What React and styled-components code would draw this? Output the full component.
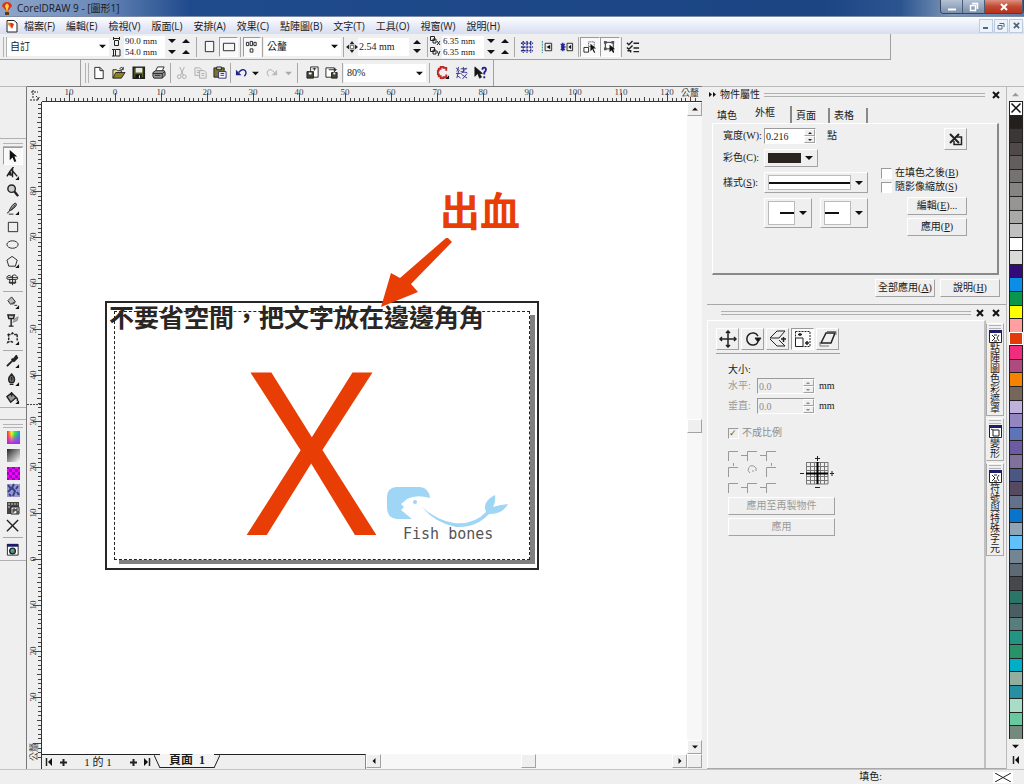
import { Fragment } from "react";
import styled, { createGlobalStyle, css } from "styled-components";

const SANS = '"Open Sans", "Noto Sans CJK TC", sans-serif';
const SERIF = '"Liberation Serif", "Noto Sans CJK TC", serif';

const GlobalStyle = createGlobalStyle`
  * { box-sizing: border-box; }
  body {
    margin: 0;
    background: #efefef;
    color: #1a1a1a;
    font-family: ${SERIF};
    font-size: 10px;
    line-height: 12px;
  }
  button, input, select {
    font: inherit;
    color: inherit;
    margin: 0;
    padding: 0;
    border: 0;
    border-radius: 0;
    background: none;
  }
  svg { display: block; flex: none; }
`;

const raised = css`
  border: 1px solid;
  border-color: #fff #a2a2a2 #a2a2a2 #fff;
`;
const sunken = css`
  border: 1px solid;
  border-color: #9a9a9a #fff #fff #9a9a9a;
`;

const Window = styled.div`
  display: flex;
  flex-direction: column;
  min-height: 100vh;
`;

/* title + menu */

const TitleBar = styled.header`
  display: flex;
  height: 17px;
  padding-left: 1px;
  gap: 4px;
  border-bottom: 1px solid #7c8ca8;
  background: linear-gradient(90deg, #8fa6c9 0, #6f8dbb 90px, #1f4a8c 190px, #1b4583 80%, #2c5590 88%, #7f97b8 93%, #5b7aa5 100%);
`;
const Title = styled.h1`
  flex: 1;
  margin: 0;
  font: 400 10px/16px ${SANS};
`;
const WindowButtons = styled.div`
  display: flex;
  height: 14px;
  border: 1px solid #33455f;
  border-top: 0;
  border-radius: 0 0 4px 4px;
  overflow: hidden;
`;
const WindowButton = styled.button`
  display: flex;
  align-items: center;
  justify-content: center;
  width: ${(p) => (p.$close ? 38 : 22)}px;
  border-right: 1px solid #4a5d7a;
  background: ${(p) => (p.$close ? "linear-gradient(#dd9080, #c04a34 50%, #b8301a)" : "linear-gradient(#b4c2d4, #7b8fab)")};
`;
const MenuBar = styled.nav`
  display: flex;
  align-items: center;
  height: 17px;
  padding: 0 1px 0 5px;
  background: linear-gradient(#fdfdff, #e4e9f6 60%, #d7def0);
`;
const MenuItem = styled.button`
  padding: 0 5px 0 6px;
  font: 400 10px/16px ${SANS};
  white-space: nowrap;
`;
const MdiButtons = styled.div`
  display: flex;
  gap: 1px;
  margin-left: auto;
`;
const MdiButton = styled.button`
  display: flex;
  align-items: center;
  justify-content: center;
  width: 14px;
  height: 14px;
  border: 1px solid #bccbe0;
  background: #edf3fb;
`;

/* toolbars */

const Bar = styled.div`
  display: flex;
  align-items: center;
  width: ${(p) => p.$width}px;
  height: 26px;
  margin-left: ${(p) => p.$offset || 0}px;
  padding-left: ${(p) => p.$pad || 3}px;
  border-right: 1px solid #a0a0a0;
  border-bottom: ${(p) => (p.$under ? "1px solid #a0a0a0" : "0")};
  border-left: ${(p) => (p.$offset ? "1px solid #a0a0a0" : "0")};
`;
const Grip = styled.span`
  width: ${(p) => (p.$wide ? p.$wide + "px" : "4px")};
  height: ${(p) => (p.$wide ? "4px" : "20px")};
  border: solid #b4b4b4;
  border-width: ${(p) => (p.$wide ? "1px 0" : "0 1px")};
`;
const Divider = styled.span`
  width: 1px;
  height: 20px;
  margin: 0 ${(p) => p.$gap || 5}px;
  background: #a8a8a8;
`;
const ToolButton = styled.button`
  display: flex;
  align-items: center;
  justify-content: center;
  width: ${(p) => p.$w || 20}px;
  height: 20px;
  ${(p) => p.$on && css`${sunken} background: #f9f9f9;`}
`;
const Combo = styled.span`
  display: flex;
  align-items: center;
  width: ${(p) => p.$width}px;
  height: 18px;
  padding: 0 3px;
  background: #fff;
`;
const Select = styled.select`
  flex: 1;
  min-width: 0;
  appearance: none;
  outline: 0;
`;
const Pair = styled.div`
  display: grid;
  grid-template-columns: 12px ${(p) => p.$field}px 14px 14px;
  grid-auto-rows: 11px;
  align-items: center;
  font-size: 9px;
`;
const Field = styled.input`
  width: ${(p) => (p.$width ? p.$width + "px" : "100%")};
  height: ${(p) => (p.$width ? "18px" : "100%")};
  min-width: 0;
  padding-left: 1px;
  background: #fff;
`;
const Arrow = styled.button`
  display: flex;
  align-items: center;
  justify-content: center;
  height: 8px;
`;
const Stack = styled.span`
  display: flex;
  flex-direction: column;
  gap: 1px;
  padding: 0 4px;
`;

/* left tool column */

const Body = styled.main`
  display: flex;
  flex: 1;
`;
const Tools = styled.aside`
  width: 27px;
  padding-top: 51px;
  border-right: 1px solid #777;
  border-top: 1px solid #bbb;
`;
const ToolSection = styled.div`
  display: flex;
  flex-direction: column;
  align-items: center;
  padding-top: 4px;
  margin-bottom: 11px;
  border: solid #b0b0b0;
  border-width: 1px 0;
`;
const ToolGroup = styled.div`
  display: grid;
  grid-auto-rows: 1fr;
  width: 20px;
  height: ${(p) => p.$height}px;
  button { height: auto; }
`;
const Rule = styled.hr`
  width: 20px;
  margin: 2px 0;
  border: 0;
  border-top: 1px solid #aaa;
`;

/* drawing area */

const Workspace = styled.section`
  display: grid;
  grid-template-columns: 15px 1fr 15px;
  grid-template-rows: 15px 1fr 15px;
  flex: 1;
  min-width: 0;
  border-top: 1px solid #777;
`;
const RulerCorner = styled.div`
  display: flex;
  align-items: center;
  justify-content: center;
`;
const TopRuler = styled.div`
  grid-column: 2 / 4;
  height: 15px;
  overflow: hidden;
  border-bottom: 1px solid #333;
`;
const SideRuler = styled.div`
  grid-row: 2 / 4;
  overflow: hidden;
  border-right: 1px solid #333;
`;
const Canvas = styled.div`
  position: relative;
  overflow: hidden;
  background: #fff;
`;
const Bleed = styled.div`
  position: absolute;
  left: 63px;
  top: 199px;
  width: 434px;
  height: 269px;
  padding: 8px 7px;
  border: 2px solid #2a2623;
`;
const Page = styled.div`
  height: 100%;
  border: 1px dashed #222;
  box-shadow: 5px 4px 0 #808080;
  background: #fff;
`;
const CanvasText = styled.span`
  position: absolute;
  left: ${(p) => p.$x}px;
  top: ${(p) => p.$y}px;
  color: ${(p) => p.$color};
  font: ${(p) => p.$weight || 700} ${(p) => p.$size}px/1 ${(p) => p.$face || '"Noto Sans CJK TC", sans-serif'};
  white-space: nowrap;
`;
const CanvasArt = styled.svg`
  position: absolute;
  left: ${(p) => p.$x}px;
  top: ${(p) => p.$y}px;
`;
const Scroll = styled.div`
  display: flex;
  flex-direction: ${(p) => (p.$across ? "row" : "column")};
  flex: 1;
  background: #f7f7f7;
`;
const ScrollButton = styled.button`
  ${raised}
  display: flex;
  align-items: center;
  justify-content: center;
  width: 15px;
  height: 14px;
  background: #efefef;
`;
const ScrollSpace = styled.span`
  flex: ${(p) => p.$grow};
`;
const PageBar = styled.div`
  grid-column: 2 / 4;
  display: flex;
`;
const PageNav = styled.div`
  display: flex;
  align-items: center;
  width: 324px;
  border-top: 1px solid #222;
  border-right: 1px solid #888;
`;
const PageCount = styled.span`
  width: 56px;
  text-align: center;
  font-size: 11px;
`;
const PageTab = styled.button`
  width: 54px;
  height: 14px;
  margin-top: -2px;
  font-weight: 700;
  font-size: 12px;
  line-height: 13px;
  border-bottom: 1px solid #222;
  background: #f4f4f4;
  white-space: pre;
`;

/* dockers */

const Dockers = styled.aside`
  display: flex;
  flex-direction: column;
  width: 304px;
  padding-left: 5px;
  border-top: 1px solid #bbb;
`;
const Docker = styled.section`
  display: flex;
  flex-direction: column;
  flex: ${(p) => (p.$grow ? 1 : "none")};
  padding-bottom: ${(p) => (p.$grow ? 0 : 7)}px;
  border-bottom: 1px solid #a8a8a8;
`;
const DockerHead = styled.div`
  display: flex;
  align-items: center;
  gap: ${(p) => (p.$indent ? 2 : 4)}px;
  height: 15px;
  padding: 0 3px 0 ${(p) => p.$indent || 2}px;
`;
const DockerTitle = styled.h2`
  margin: 0;
  font: 400 10px/14px ${SERIF};
`;
const Stripe = styled.span`
  flex: 1;
  height: 4px;
  border: solid #b0b0b0;
  border-width: 1px 0;
`;
const IconButton = styled.button`
  display: flex;
  align-items: center;
  justify-content: center;
  width: 14px;
  height: 14px;
`;
const Tabs = styled.div`
  display: flex;
  align-items: flex-end;
  height: 21px;
  padding-left: 6px;
`;
const Tab = styled.button`
  width: ${(p) => (p.$on ? 41 : 38)}px;
  height: ${(p) => (p.$on ? 17 : 15)}px;
  padding-left: 4px;
  padding-bottom: ${(p) => (p.$on ? 3 : 0)}px;
  text-align: left;
  border-right: ${(p) => (p.$bar ? "2px solid #888" : 0)};
`;
const TabBody = styled.div`
  ${raised}
  display: flex;
  height: 152px;
  margin: 0 7px 0 5px;
  padding: 4px 10px;
  border-color: #fff #8a8a8a #8a8a8a #fff;
  border-right-width: 2px;
  border-bottom-width: 2px;
`;
const Form = styled.div`
  display: grid;
  grid-template-columns: 41px 1fr;
  grid-template-rows: 16px 18px 21px 30px;
  row-gap: 5px;
  align-items: center;
  align-content: start;
  width: 146px;
`;
const Inline = styled.div`
  display: flex;
  align-items: center;
  gap: ${(p) => p.$gap || 0}px;
  height: ${(p) => (p.$fill ? "100%" : "auto")};
`;
const Spin = styled.span`
  ${sunken}
  display: flex;
  width: ${(p) => p.$width}px;
  height: 16px;
  background: ${(p) => (p.$off ? "#efefef" : "#fff")};
  color: ${(p) => (p.$off ? "#8c8c8c" : "#222")};
  input { background: none; }
`;
const SpinButtons = styled.span`
  display: flex;
  flex-direction: column;
  width: 14px;
  background: #efefef;
  button {
    ${raised}
    display: flex;
    align-items: center;
    justify-content: center;
    height: 7px;
  }
`;
const Picker = styled.button`
  ${raised}
  display: flex;
  align-items: center;
  gap: 4px;
  width: ${(p) => p.$width}px;
  height: 100%;
  padding: 0 4px 0 3px;
`;
const Preview = styled.span`
  display: flex;
  align-items: center;
  justify-content: ${(p) => p.$align || "center"};
  flex: 1;
  height: ${(p) => p.$h}px;
  background: ${(p) => p.$fill || "#fff"};
  border: 1px solid ${(p) => (p.$fill ? p.$fill : "#bbb")};
`;
const Line = styled.span`
  width: ${(p) => p.$w};
  height: 2px;
  background: #111;
`;
const SideForm = styled.div`
  display: flex;
  flex-direction: column;
  align-items: flex-end;
  flex: 1;
  padding-right: 20px;
`;
const Checks = styled.div`
  align-self: flex-start;
  margin: 16px 0 3px 12px;
`;
const Check = styled.label`
  display: flex;
  align-items: center;
  gap: 3px;
  height: 14px;
  margin: ${(p) => (p.$off ? "10px 0 11px" : 0)};
  white-space: nowrap;
  color: ${(p) => (p.$off ? "#8c8c8c" : "inherit")};
  input {
    ${sunken}
    appearance: none;
    width: 11px;
    height: 11px;
    background: #fff;
  }
  input:checked {
    background: #efefef;
  }
  input:checked::before {
    content: "✓";
    display: block;
    color: #555;
    font: 700 9px/9px "DejaVu Sans", sans-serif;
  }
`;
const PushButton = styled.button`
  ${raised}
  width: ${(p) => p.$width}px;
  height: 18px;
  margin-top: ${(p) => p.$top || 0}px;
  color: ${(p) => (p.$off ? "#9a9a9a" : "inherit")};
`;
const SquareButton = styled.button`
  ${raised}
  display: flex;
  align-items: center;
  justify-content: center;
  width: 23px;
  height: 22px;
  ${(p) => p.$on && css`${sunken} background: #fafafa;`}
`;
const DockerFoot = styled.div`
  display: flex;
  justify-content: flex-end;
  gap: 5px;
  padding: 4px 6px 0;
`;
const Split = styled.div`
  display: flex;
  flex: 1;
`;
const TransformBody = styled.div`
  flex: 1;
  padding: 7px 8px;
  border: solid;
  border-width: 1px 2px 0 1px;
  border-color: #fff #c0c0c0 #fff #fff;
`;
const TransformTools = styled.div`
  display: flex;
  gap: 2px;
  width: 124px;
  padding-bottom: 3px;
  border-bottom: 1px solid #a0a0a0;
`;
const TransformForm = styled.div`
  display: flex;
  flex-direction: column;
  align-items: flex-start;
  padding: 10px 12px 0;
`;
const SizeRow = styled.div`
  display: grid;
  grid-template-columns: 29px 58px auto;
  align-items: center;
  height: 20px;
  label { color: #999; }
  b { padding-left: 4px; font-weight: 400; }
`;
const SideTabs = styled.div`
  display: flex;
  flex-direction: column;
  gap: 2px;
  width: 18px;
  margin-right: 2px;
  padding-top: 3px;
`;
const SideTab = styled.button`
  display: flex;
  flex-direction: column;
  align-items: center;
  gap: 1px;
  padding: 1px 0;
  border: 1px solid;
  border-color: #fff #aaa #aaa ${(p) => (p.$on ? "#efefef" : "#aaa")};
  line-height: 10px;
`;
const SideTabName = styled.span`
  width: 10px;
`;

/* palette + status */

const Palette = styled.aside`
  display: flex;
  flex-direction: column;
  align-items: center;
  width: 18px;
  padding-bottom: 2px;
  border: solid #bbb;
  border-width: 1px 0 0 1px;
`;
const Swatches = styled.div`
  display: grid;
  grid-auto-rows: minmax(0, 1fr);
  flex: 1;
  width: 14px;
`;
const Swatch = styled.button`
  display: flex;
  align-items: center;
  justify-content: center;
  overflow: hidden;
  border: 1px solid #222;
  border-bottom-width: 0;
  background: ${(p) => p.$color};
  ${(p) => p.$picked && css`border: 1px solid #a33; outline: 1px solid #fff; outline-offset: -1px;`}
`;
const StatusBar = styled.footer`
  display: flex;
  align-items: center;
  justify-content: flex-end;
  gap: 111px;
  height: 15px;
  padding-right: 11px;
  border-top: 1px solid #c4c4c4;
`;
const NoFill = styled.span`
  padding: 1px 2px;
  background: #fff;
`;

const S = ({ w = 14, h = w, box, children, ...rest }) => (
  <svg width={w} height={h} viewBox={box || `0 0 ${w} ${h}`} fill="none" stroke="#222" strokeWidth="1" aria-hidden="true" {...rest}>
    {children}
  </svg>
);

const Tri = ({ dir = "down", size = 7, color = "#111" }) => {
  const d = {
    down: "M0 2H8L4 6Z",
    up: "M0 6H8L4 2Z",
    left: "M6 0V8L2 4Z",
    right: "M2 0V8L6 4Z",
  }[dir];
  return <S w={size} box="0 0 8 8" fill={color} stroke="none"><path d={d} /></S>;
};

const Cross = ({ size = 8, color = "#111", width = 2 }) => (
  <S w={size} box="0 0 8 8" stroke={color} strokeWidth={width}><path d="M1 1L7 7M7 1L1 7" /></S>
);

const FLY = "M10 14H14V10Z";
const icons = {
  new: <path d="M3 1.5H8.500L12 5V13.500H3ZM8.500 1.500V5H12" fill="#fff" />,
  open: <><path d="M1 13V4H5L6 5H10V7" fill="#e8e28a" /><path d="M1 13L4 7H14L10 13Z" fill="#8a8420" /><path d="M8 3Q10 0 12 3M12 1V4H9" /></>,
  save: <><path d="M1.500 1.500H13V13H1.500Z" fill="#5c6420" strokeWidth="2" /><path d="M4 2H11V7H4Z" fill="#e8e8e8" stroke="none" /><path d="M4 9H10V13H4Z" fill="#111" /><path d="M8 10V13" stroke="#fff" /></>,
  print: <><path d="M4 5L6 1H13L11 5" fill="#fff" /><path d="M1 7L4 5H13L14 7V10L11 13H2L1 11Z" fill="#999" /><path d="M1 8H11L14 6M11 8V13M3 10H9" /></>,
  cut: <g stroke="#aaa"><path d="M5 1L9 10M10 1L6 10" /><circle cx="4.500" cy="11.500" r="2" /><circle cx="10" cy="11.500" r="2" /></g>,
  copy: <g stroke="#aaa" fill="#eee"><path d="M1 2H6L8 4V10H1ZM3 5H6M3 7H6" /><path d="M6 5H11L13 7V13H6ZM8 8H11M8 10H11" /></g>,
  paste: <><path d="M1 2H12V12H1Z" fill="#77752e" /><path d="M4 1H9V4H4Z" fill="#ccc" /><path d="M6 6H14V13H6ZM8 8H12M8 10H12" fill="#fff" stroke="#2a2a70" /></>,
  undo: <><path d="M4 7Q8 2 11 5Q13 8 10 11" stroke="#22228a" strokeWidth="1.500" /><path d="M1 4V10H7Z" fill="#22228a" stroke="none" /></>,
  redo: <><path d="M10 7Q6 2 3 5Q1 8 4 11" stroke="#aaa" /><path d="M13 4V10H7Z" fill="#bbb" stroke="none" /></>,
  import: <><path d="M5 1H13V12H5Z" fill="#fff" /><path d="M1 6H8V13H1Z" fill="#443" /><path d="M3 7H6V9H3Z" fill="#fff" stroke="none" /><path d="M7 3H11M9 2V5" /></>,
  export: <><path d="M1 2H10V12H1Z" fill="#fff" /><path d="M7 7H13V13H7Z" fill="#443" /><path d="M9 7H11V9H9Z" fill="#fff" stroke="none" /><path d="M4 4H12M10 2L12 4L10 6" /></>,
  app: <><path d="M11 5V2H8V1H5V3H3V5H2V9H3V11H5V13H8V12H11V9" stroke="#c02525" strokeWidth="2" /><path d={FLY} fill="#111" stroke="none" /></>,
  corel: <path d="M1 2L5 5M4 1L2 6M6 3H13M9 1V7M12 2L7 8M1 8H6M4 5L2 13M2 10L6 13M7 9L13 13M13 8L8 14M6 6L13 7" stroke="#33338c" />,
  help: <><path d="M1 1V11L4 8L6 13L8 12L6 8H9Z" fill="#111" /><path d="M9 4Q9 1 12 2Q14 4 11 7V9M11 11V13" stroke="#22228a" strokeWidth="2" /></>,
  portrait: <path d="M2.500 1.500H11.500V12.500H2.500Z" fill="#f6f6f6" />,
  landscape: <path d="M1.500 3.500H13.500V11.500H1.500Z" fill="#f6f6f6" />,
  pages: <path d="M1.500 2.500H4V6H1.500ZM5.500 1.500H8V6H5.500ZM9.500 2.500H12V6H9.500ZM5.500 9.500H8.500V13H5.500Z" />,
  nudge: <><path d="M7.500 0L10.500 4H4.500ZM7.500 15L10.500 11H4.500ZM0 7.500L4 4.500V10.500ZM15 7.500L11 4.500V10.500Z" fill="#222" stroke="none" /><path d="M5.500 5.500H9.500V9.500H5.500Z" stroke="#555" fill="#fff" /></>,
  snapGrid: <path d="M1 3.500H14M1 7.500H14M1 11.500H14M3.500 1V14M7.500 1V14M11.500 1V14" stroke="#2a2a90" strokeDasharray="2 1" strokeWidth="1.500" />,
  snapGuide: <><path d="M2.500 1V14" stroke="#2a8080" strokeDasharray="2 1" /><path d="M5.500 3.500H12.500V11.500H5.500Z" stroke="#222" /><path d="M11 5V10L7 7.500Z" fill="#111" stroke="none" /></>,
  snapObject: <><path d="M1 4L5 11M5 4L1 11M1 7.500H6M3 3V12" stroke="#22229a" strokeWidth="1.500" /><path d="M7.500 3.500H13.500V11.500H7.500Z" /><path d="M12 5V10L9 7.500Z" fill="#111" stroke="none" /></>,
  drawOn: <><path d="M1 8H6V13H1Z" fill="#fff" /><path d="M6 2H12V7H6Z" strokeDasharray="1 1" /><path d="M8 4V12L10 10L12 14L13 13L11 9H14Z" fill="#111" stroke="none" /></>,
  treat: <><path d="M2.500 2.500H11V9.500H2.500Z" /><path d="M1 1H4V4H1ZM9 1H12V4H9ZM1 8H4V11H1Z" fill="#555" stroke="none" /><path d="M7 5V13L9 11L11 14L12 13L11 10H13Z" fill="#111" stroke="none" /></>,
  options: <path d="M1 3L3 5L7 1M1 8L3 10L7 6M8 3.500H14M8 8.500H14M1.500 11.500H5V13.500M8 12.500H14" strokeWidth="1.500" />,
  pick: <path d="M4 1V12L7 9L9 14L11 13L9 8H12Z" fill="#111" stroke="none" />,
  shape: <><path d="M8 0L4 5L1 10M6 3L12 10M7 2V11" strokeWidth="1.500" /><path d="M2 8L5 5L6 9Z" fill="#222" /><path d={FLY} fill="#111" stroke="none" /></>,
  zoom: <><circle cx="6" cy="5" r="4" fill="#ccc" strokeWidth="1.500" /><path d="M9 8L13 13" strokeWidth="2.500" /></>,
  freehand: <><path d="M1 12Q4 11 4 8Q6 3 10 1Q13 3 8 7Q6 9 4 9M3 13H8" fill="#aaa" /><path d="M5 9L10 3" /><path d={FLY} fill="#111" stroke="none" /></>,
  rect: <path d="M2.500 2.500H12.500V12.500H2.500Z" />,
  oval: <ellipse cx="7" cy="7" rx="6" ry="4" />,
  polygon: <><path d="M6.500 1.500L12 5.500L10 12H3L1 5.500Z" /><path d={FLY} fill="#111" stroke="none" /></>,
  spiral: <path d="M1 4Q3 1 6 4Q9 0 12 4Q14 7 10 7H3Q0 7 1 4M2 5H12M4 7V11H10V7M7 3V13M3 10H11" />,
  fillTool: <><path d="M2 5L6 1L10 6L5 9ZM7 9L10 7M9 10H12" fill="#bbb" /><path d={FLY} fill="#111" stroke="none" /></>,
  transparency: <><path d="M2 1H9L8 5H3ZM5.500 5V13M3 13H8" fill="#bbb" strokeWidth="1.500" /><path d="M8 6L13 3L12 7L7 9" fill="#aaa" stroke="#888" /></>,
  envelope: <><path d="M2 2Q5 4 7 1Q9 4 12 2V9M2 2Q4 6 2 11Q6 9 8 12" strokeDasharray="3 1" strokeWidth="1.500" /><path d={FLY} fill="#111" stroke="none" /></>,
  dropper: <><path d="M1 12L7 6M6 4L9 7M8 5L11 1L12 3L9 6Z" fill="#222" strokeWidth="2" /><path d={FLY} fill="#111" stroke="none" /></>,
  pen: <><path d="M6 1Q1 6 4 10H8Q11 6 6 1ZM4 12H8M6 4V8" fill="#777" strokeWidth="1.500" /><path d={FLY} fill="#111" stroke="none" /></>,
  bucket: <><path d="M1 6L6 2L11 7L5 12ZM6 1V6M11 7Q13 8 12 11" fill="#999" strokeWidth="1.500" /><path d={FLY} fill="#111" stroke="none" /></>,
  none: <path d="M1 1L13 13M13 1L1 13" strokeWidth="1.500" />,
  docker: <><path d="M1.500 1.500H13V13H1.500Z" fill="#fff" /><path d="M1 1H13V4H1Z" fill="#1c1c6a" stroke="none" /><circle cx="7" cy="8.500" r="3" fill="#4a9" strokeWidth="1.500" /><path d="M7 8.500L9 11" stroke="#d33" /></>,
};
const Icon = ({ name, size = 14 }) => <S w={size} box="0 0 15 15">{icons[name]}</S>;

const FillChip = ({ id }) => (
  <S w={14}>
    <defs>
      <linearGradient id="hue"><stop offset="0" stopColor="#f22" /><stop offset=".35" stopColor="#fe2" /><stop offset=".6" stopColor="#2e4" /><stop offset="1" stopColor="#28f" /></linearGradient>
      <linearGradient id="hueFade" x2="0" y2="1"><stop offset=".2" stopColor="#e0f" stopOpacity="0" /><stop offset="1" stopColor="#a2f" /></linearGradient>
      <linearGradient id="grey" x2="1" y2="1"><stop offset="0" stopColor="#222" /><stop offset="1" stopColor="#fff" /></linearGradient>
      <pattern id="check" width="6" height="6" patternUnits="userSpaceOnUse"><path d="M0 0H6V6H0Z" fill="#f0e" stroke="none" /><path d="M0 0H3V3H0ZM3 3H6V6H3Z" fill="#90c" stroke="none" /></pattern>
    </defs>
    {id === "hue" && <><path d="M1 1H14V14H1Z" fill="url(#hue)" stroke="none" /><path d="M1 1H14V14H1Z" fill="url(#hueFade)" stroke="none" /></>}
    {id === "grey" && <path d="M1 1H14V14H1Z" fill="url(#grey)" stroke="none" />}
    {id === "check" && <path d="M1 1H14V14H1Z" fill="url(#check)" stroke="none" />}
    {id === "marble" && <><path d="M1 1H14V14H1Z" fill="#99c" stroke="none" /><path d="M2 2L5 6L2 9M8 1L6 5L9 8L7 13M12 3L10 6M3 11L5 13M11 9L13 12" stroke="#33408c" strokeWidth="2" /></>}
    {id === "ps" && <><path d="M1 1H13V13H1Z" fill="#444" stroke="none" /><path d="M2 3H12M2 6H5" stroke="#ccc" strokeDasharray="2 1" /><path d="M5 6H13V13H5Z" fill="#eee" /><path d="M7 12V8H9V10H7M12 8H10V10H12V12H10" /></>}
  </S>
);

const menus = ["檔案(F)", "編輯(E)", "檢視(V)", "版面(L)", "安排(A)", "效果(C)", "點陣圖(B)", "文字(T)", "工具(O)", "視窗(W)", "說明(H)"];

const toolGroups = [
  { height: 142, names: ["pick", "shape", "zoom", "freehand", "rect", "oval", "polygon", "spiral"] },
  { height: 54, names: ["fillTool", "transparency", "envelope"] },
  { height: 54, names: ["dropper", "pen", "bucket"] },
];

const colors = [
  "#fff", "#231f1c", "#3b3735", "#4f4a49", "#615e5c", "#757372", "#868483", "#979594", "#a9a9a8", "#c0c0c0",
  "#ffffff", "#dadada", "#320a7a", "#0a8ee8", "#0a964a", "#ffff00", "#ff9f9f", "#e23b0a", "#f02c7c", "#ad4a80",
  "#f58200", "#75675c", "#bfb1dd", "#9385bf", "#5f73b8", "#6c5ba3", "#7f719c", "#4a5684", "#564a60", "#65708a",
  "#0874cc", "#8fa5b5", "#60c0fa", "#738592", "#5d6a74", "#45494b", "#2a7468", "#4a5d63", "#587d7f", "#229483",
  "#2a9268", "#00aec8", "#93ad9f", "#2490a2", "#a8dcc6", "#68c8a0", "#76897f",
];
const PICKED = 17;

const STEP = 46;
const range = (from, to) => Array.from({ length: to - from + 1 }, (_, i) => from + i);

// one tick per millimetre, a longer one on each ten
const tickPath = (origin, from, to, vertical) =>
  range(from, to)
    .map((n) => {
      const at = Math.round(origin + (n * STEP) / 10) + 0.5;
      const len = n % 10 === 0 ? 8 : n % 5 === 0 ? 4 : 3;
      return vertical ? `M14 ${at}H${14 - len}` : `M${at} 14V${14 - len}`;
    })
    .join("");

const rulerText = { fontSize: 9, fill: "#444", stroke: "none", textAnchor: "middle" };

function HorizontalRuler() {
  return (
    <svg width="100%" height="14" stroke="#444" fill="none">
      <path d={tickPath(73, -15, 126)} />
      <g {...rulerText}>
        {range(-1, 12).map((n) => <text key={n} x={73 + n * STEP} y="8">{Math.abs(n * 10)}</text>)}
        <text x="648" y="9">公釐</text>
      </g>
    </svg>
  );
}

function VerticalRuler() {
  return (
    <svg width="14" height="660" stroke="#444" fill="none">
      <path d={tickPath(457, -99, 43, true)} />
      <path d="M0 302.500H14" strokeDasharray="2 1" />
      <g {...rulerText}>
        {range(-9, 3).map((n) => (
          <text key={n} transform={`translate(9 ${457 + n * STEP}) rotate(-90)`}>{Math.abs(n * 10)}</text>
        ))}
        <text transform="translate(10 650) rotate(-90)">公釐</text>
      </g>
    </svg>
  );
}

function SpinField({ id, value, width, off }) {
  const tone = off ? "#888" : "#222";
  return (
    <Spin $width={width} $off={off}>
      <Field id={id} defaultValue={value} disabled={off} />
      <SpinButtons>
        <button aria-label="增加" disabled={off}><Tri dir="up" size={4} color={tone} /></button>
        <button aria-label="減少" disabled={off}><Tri size={4} color={tone} /></button>
      </SpinButtons>
    </Spin>
  );
}

function ComboBox({ label, value, width }) {
  return (
    <Combo $width={width}>
      <Select aria-label={label}><option>{value}</option></Select>
      <Tri />
    </Combo>
  );
}

function FieldPair({ rows, field }) {
  return (
    <Pair $field={field}>
      {rows.map(([label, value, icon]) => (
        <Fragment key={label}>
          {icon}
          <Field aria-label={label} defaultValue={value} />
          <Arrow aria-label={label + " 減少"}><Tri size={8} /></Arrow>
          <Arrow aria-label={label + " 增加"}><Tri dir="up" size={8} /></Arrow>
        </Fragment>
      ))}
    </Pair>
  );
}

const Buttons = ({ names, w }) => names.map((n) => <ToolButton key={n} $w={w} aria-label={n}><Icon name={n} /></ToolButton>);

function PropertyBar() {
  return (
    <Bar $width={891} $under>
      <Grip />
      <ComboBox label="紙張" value="自訂" width={102} />
      <Inline $gap={3}>
        <span />
        <FieldPair
          field={41}
          rows={[
            ["寬", "90.0 mm", <S key="w" w={9}><path d="M1 1.500H8M2.500 3.500H6.500V8.500H2.500ZM1.500 0V3M7.500 0V3" /></S>],
            ["高", "54.0 mm", <S key="h" w={9}><path d="M1.500 1V8M3.500 1.500H8V8H3.500ZM0 1.500H3M0 8H3" /></S>],
          ]}
        />
      </Inline>
      <Divider $gap={3} />
      <ToolButton aria-label="直向" $w={19}><Icon name="portrait" /></ToolButton>
      <ToolButton aria-label="橫向" $w={19} $on><Icon name="landscape" /></ToolButton>
      <Divider $gap={2} />
      <ToolButton aria-label="多頁" $w={18} $on><Icon name="pages" /></ToolButton>
      <Divider $gap={1} />
      <ComboBox label="單位" value="公釐" width={77} />
      <Divider $gap={2} />
      <Icon name="nudge" size={12} />
      <Field aria-label="微調" defaultValue="2.54 mm" $width={51} />
      <Stack>
        <Arrow aria-label="增加"><Tri dir="up" size={8} /></Arrow>
        <Arrow aria-label="減少"><Tri size={8} /></Arrow>
      </Stack>
      <Divider $gap={2} />
      <FieldPair
        field={42}
        rows={[
          ["X", "6.35 mm", <S key="x" w={11} h={10}><path d="M.5 .5H4.500V4.500H.5ZM3 3H6V7H3ZM7 5L10 9M10 5L7 9" /></S>],
          ["Y", "6.35 mm", <S key="y" w={11} h={10}><path d="M.5 .5H4.500V4.500H.5ZM3 3H6V7H3ZM7 4L8.500 7M10 4L8 9" /></S>],
        ]}
      />
      <Divider $gap={2} />
      <Buttons names={["snapGrid", "snapGuide", "snapObject"]} />
      <Divider $gap={1} />
      <ToolButton aria-label="drawOn" $on><Icon name="drawOn" /></ToolButton>
      <ToolButton aria-label="treat" $on><Icon name="treat" /></ToolButton>
      <Divider $gap={1} />
      <Buttons names={["options"]} />
    </Bar>
  );
}

function StandardBar() {
  return (
    <Bar $width={414} $offset={80} $pad={4}>
      <Grip />
      <Buttons names={["new", "open", "save", "print"]} />
      <Divider $gap={1} />
      <Buttons names={["cut", "copy", "paste"]} w={19} />
      <Divider $gap={1} />
      <Buttons names={["undo"]} />
      <Arrow aria-label="復原清單"><Tri /></Arrow>
      <Buttons names={["redo"]} w={26} />
      <Arrow aria-label="重做清單"><Tri color="#aaa" /></Arrow>
      <Divider $gap={5} />
      <Buttons names={["import", "export"]} w={19} />
      <Divider $gap={1} />
      <ComboBox label="縮放" value="80%" width={82} />
      <Divider $gap={3} />
      <Buttons names={["app", "corel", "help"]} w={19} />
    </Bar>
  );
}

function Toolbox() {
  return (
    <Tools>
      <ToolSection>
        <Grip $wide={20} />
        {toolGroups.map((g, i) => (
          <Fragment key={g.names[0]}>
            {i > 0 && <Rule />}
            <ToolGroup $height={g.height}>
              {g.names.map((n) => <ToolButton key={n} aria-label={n} $on={n === "pick"}><Icon name={n} /></ToolButton>)}
            </ToolGroup>
          </Fragment>
        ))}
      </ToolSection>
      <ToolSection>
        <Grip $wide={20} />
        <ToolGroup $height={107}>
          {["hue", "grey", "check", "marble", "ps"].map((n) => <ToolButton key={n} aria-label={n}><FillChip id={n} /></ToolButton>)}
          <ToolButton aria-label="none"><Icon name="none" /></ToolButton>
        </ToolGroup>
        <Rule />
        <ToolGroup $height={20}><Buttons names={["docker"]} /></ToolGroup>
      </ToolSection>
    </Tools>
  );
}

function Artwork() {
  return (
    <Canvas>
      <Bleed><Page /></Bleed>
      <CanvasText $x={67} $y={202} $size={25} $color="#2a2623">不要省空間，把文字放在邊邊角角</CanvasText>
      <CanvasText $x={398} $y={87} $size={40} $color="#e83e05">出血</CanvasText>
      <CanvasText $x={204} $y={232} $size={227} $weight={400} $face='"Open Sans", sans-serif' $color="#e83e05">X</CanvasText>
      <CanvasArt $x={338} $y={135} width="72" height="72" viewBox="0 0 72 72">
        <path d="M68 1L72 5L31 47L38 55L1 70L11 36L20 41L66 1Z" fill="#e83e05" />
      </CanvasArt>
      <CanvasArt $x={344} $y={384} width="124" height="44" viewBox="0 0 124 44">
        <path d="M10 1H34Q43 2 44 12Q30 8 21 13L15 18L18 21L15 24L26 33H11Q1 32 1 22V11Q1 2 10 1Z" fill="#9fd5f5" />
        <path d="M36 21Q50 34 68 37Q88 39 100 26Q96 15 109 9Q110 15 107 21Q113 19 122 18Q117 28 103 28Q90 42 70 41Q49 37 36 21Z" fill="#9fd5f5" />
        <circle cx="29" cy="16" r="2" fill="#9fd5f5" />
      </CanvasArt>
      <CanvasText $x={361} $y={425} $size={15} $weight={400} $color="#555" $face='"DejaVu Sans Mono", monospace'>Fish bones</CanvasText>
    </Canvas>
  );
}

function Drawing() {
  return (
    <Workspace>
      <RulerCorner><S w={12}><path d="M2 3H9M4 1V9M7 7L10 10M8 10H10V8M1 11H9" strokeDasharray="2 1" /></S></RulerCorner>
      <TopRuler><HorizontalRuler /></TopRuler>
      <SideRuler><VerticalRuler /></SideRuler>
      <Artwork />
      <Scroll>
        <ScrollButton aria-label="上"><Tri dir="up" size={6} /></ScrollButton>
        <ScrollSpace $grow={303} />
        <ScrollButton aria-label="垂直捲軸" />
        <ScrollSpace $grow={308} />
        <ScrollButton aria-label="下"><Tri size={6} /></ScrollButton>
      </Scroll>
      <PageBar>
        <PageNav>
          <IconButton aria-label="第一頁"><S w={8}><path d="M1.500 0V8" strokeWidth="1.500" /><path d="M7 0V8L3 4Z" fill="#111" stroke="none" /></S></IconButton>
          <IconButton aria-label="前加一頁"><S w={7}><path d="M0 3.500H7M3.500 0V7" strokeWidth="2" /></S></IconButton>
          <PageCount>1 的 1</PageCount>
          <IconButton aria-label="後加一頁"><S w={7}><path d="M0 3.500H7M3.500 0V7" strokeWidth="2" /></S></IconButton>
          <IconButton aria-label="最後一頁"><S w={8}><path d="M6.500 0V8" strokeWidth="1.500" /><path d="M1 0V8L5 4Z" fill="#111" stroke="none" /></S></IconButton>
          <S w={6} h={14}><path d="M0 0L6 13" /></S>
          <PageTab>頁面  1</PageTab>
          <S w={6} h={14}><path d="M6 0L0 13" /></S>
        </PageNav>
        <Scroll $across>
          <ScrollButton aria-label="左"><Tri dir="left" size={6} /></ScrollButton>
          <ScrollSpace $grow={142} />
          <ScrollButton aria-label="水平捲軸" />
          <ScrollSpace $grow={138} />
          <ScrollButton aria-label="右"><Tri dir="right" size={6} /></ScrollButton>
        </Scroll>
        <ScrollButton as="span" />
      </PageBar>
    </Workspace>
  );
}

function PropertiesDocker() {
  return (
    <Docker>
      <DockerHead>
        <S w={7}><path d="M0 1V6L3 3.500ZM4 1V6L7 3.500Z" fill="#111" stroke="none" /></S>
        <DockerTitle>物件屬性</DockerTitle>
        <Stripe />
        <IconButton aria-label="關閉"><Cross /></IconButton>
      </DockerHead>
      <Tabs>
        <Tab>填色</Tab>
        <Tab $on $bar>外框</Tab>
        <Tab $bar>頁面</Tab>
        <Tab $bar>表格</Tab>
      </Tabs>
      <TabBody>
        <Form>
          <label htmlFor="width">寬度(W):</label>
          <Inline $gap={11}><SpinField id="width" value="0.216" width={52} />點</Inline>
          <label htmlFor="color">彩色(C):</label>
          <Picker id="color" $width={54}><Preview $h={10} $fill="#2a2420" /><Tri size={8} /></Picker>
          <label htmlFor="style">樣式(<u>S</u>):</label>
          <Picker id="style" $width={104}><Preview $h={15}><Line $w="100%" /></Preview><Tri size={8} /></Picker>
          <span />
          <Inline $gap={8} $fill>
            <Picker $width={48} aria-label="起點"><Preview $h={24} $align="flex-end"><Line $w="14px" /></Preview><Tri size={8} /></Picker>
            <Picker $width={48} aria-label="終點"><Preview $h={24} $align="flex-start"><Line $w="14px" /></Preview><Tri size={8} /></Picker>
          </Inline>
        </Form>
        <SideForm>
          <SquareButton aria-label="無外框"><S w={14}><path d="M1 2L10 11M10 2L1 11" strokeWidth="2" /><path d="M8 5H12.500V12.500H5V9" strokeWidth="1.500" /></S></SquareButton>
          <Checks>
            <Check><input type="checkbox" /><span>在填色之後(<u>B</u>)</span></Check>
            <Check><input type="checkbox" /><span>隨影像縮放(<u>S</u>)</span></Check>
          </Checks>
          <PushButton $width={60}>編輯(<u>E</u>)...</PushButton>
          <PushButton $width={60} $top={3}>應用(<u>P</u>)</PushButton>
        </SideForm>
      </TabBody>
      <DockerFoot>
        <PushButton $width={60}>全部應用(<u>A</u>)</PushButton>
        <PushButton $width={60}>說明(<u>H</u>)</PushButton>
      </DockerFoot>
    </Docker>
  );
}

const transformIcons = {
  位置: <path d="M1 9H17M9 1V17M3 7L1 9L3 11M15 7L17 9L15 11M7 3L9 1L11 3M7 15L9 17L11 15" strokeWidth="1.500" />,
  旋轉: <><path d="M14 6A6 6 0 1 0 14 12" strokeWidth="1.500" /><path d="M11 8H17L14 12Z" fill="#111" /></>,
  縮放: <><path d="M1 8L8 1H16L10 8ZM1 9L8 16H16L10 10" /><path d="M12 9H17M14.500 7V12" strokeWidth="1.500" /></>,
  大小: <><path d="M1.500 1.500H16V16.500H1.500Z" strokeDasharray="2 1" /><path d="M1.500 8H9V16.500H1.500Z" fill="#fff" /><path d="M4 4.500H8M6 3V6M11 13H15M13 11V15" strokeWidth="1.500" /></>,
  傾斜: <><path d="M2 13L7 3H16L12 13Z" strokeWidth="1.500" /><path d="M8 1.500H17L17 5M1 12V16H10" stroke="#777" /></>,
};

function TransformDocker() {
  return (
    <Docker $grow>
      <DockerHead $indent={14}>
        <Stripe />
        <IconButton aria-label="收合"><Cross /></IconButton>
        <IconButton aria-label="關閉"><Cross /></IconButton>
      </DockerHead>
      <Split>
        <TransformBody>
          <TransformTools>
            {Object.entries(transformIcons).map(([name, art]) => (
              <SquareButton key={name} aria-label={name} $on={name === "大小"}><S w={18}>{art}</S></SquareButton>
            ))}
          </TransformTools>
          <TransformForm>
            <span>大小:</span>
            <SizeRow><label htmlFor="sx">水平:</label><SpinField id="sx" value="0.0" width={58} off /><b>mm</b></SizeRow>
            <SizeRow><label htmlFor="sy">垂直:</label><SpinField id="sy" value="0.0" width={58} off /><b>mm</b></SizeRow>
            <Check $off><input type="checkbox" defaultChecked disabled />不成比例</Check>
            <Inline $gap={21}>
              <S w={51} h={44} stroke="#999">
                {[0, 19, 38].map((x) => [0, 16, 32].map((y) => x === 19 && y === 16
                  ? <path key={x + "-" + y} d="M22 22A4 4 0 1 1 28 20M25 19V21" />
                  : <path key={x + "-" + y} d={`M${x + 0.5} ${y + 10}V${y + 0.5}H${x + 10}`} />))}
                <path d="M13 4.500H19M32 4.500H38M13 36.500H19M32 36.500H38M5.500 12V15M43.500 12V15" />
              </S>
              <S w={34} h={34}>
                <path d="M6.500 6V28M10.500 6V28M14.500 6V28M20.500 6V28M24.500 6V28M28 6V28M6 6.500H28M6 10.500H28M6 14.500H28M6 20.500H28M6 24.500H28M6 28H28" stroke="#777" />
                <path d="M17.500 6V28M6 17.500H28" strokeWidth="2" stroke="#000" />
                <path d="M15 2.500H20M17.500 0V5M0 17.500H4M30 17.500H34M32 15V20M15 31.500H20" />
              </S>
            </Inline>
            <PushButton $width={107} $top={2} $off disabled>應用至再製物件</PushButton>
            <PushButton $width={107} $top={3} $off disabled>應用</PushButton>
          </TransformForm>
        </TransformBody>
        <SideTabs>
          {["點陣圖色彩遮罩", "變形", "符號與特殊字元"].map((t) => (
            <SideTab key={t} $on={t === "變形"}>
              <Grip $wide={12} />
              <S w={13}>
                <path d="M.5 .5H12.500V12.500H.5Z" fill="#fff" />
                <path d="M0 0H13V3H0Z" fill="#1c1c6a" stroke="none" />
                <path d={t === "變形" ? "M4 5H10V11H4ZM2 4L4 5" : "M3 5L6 8L3 11M10 5L8 8L10 11M5 5H8M5 11H8"} />
              </S>
              <SideTabName>{t}</SideTabName>
            </SideTab>
          ))}
        </SideTabs>
      </Split>
    </Docker>
  );
}

function ColorPalette() {
  return (
    <Palette>
      <IconButton aria-label="上捲"><Tri dir="up" color="#999" /></IconButton>
      <Swatches>
        {colors.map((c, i) => (
          <Swatch key={i} $color={c} $picked={i === PICKED} aria-label={i ? c : "無色"}>
            {i === 0 && <Cross size={12} width={1} />}
          </Swatch>
        ))}
      </Swatches>
      <IconButton aria-label="下捲"><Tri /></IconButton>
      <IconButton aria-label="展開"><S w={8}><path d="M1.500 0V8" strokeWidth="1.500" /><path d="M7 0V8L3 4Z" fill="#111" stroke="none" /></S></IconButton>
    </Palette>
  );
}

export default function App() {
  return (
    <Window>
      <GlobalStyle />
      <TitleBar>
        <S w={12} h={16} stroke="none">
          <path d="M1 6Q2 2 6 2Q10 2 11 6L6 12Z" fill="#e0301e" />
          <path d="M4 6Q6 1 8 6L6 12Z" fill="#ffd23a" />
          <path d="M4 12H8V15H4Z" fill="#5a3a1a" />
        </S>
        <Title>CorelDRAW 9 - [圖形1]</Title>
        <WindowButtons>
          <WindowButton aria-label="最小化"><S w={10} h={10}><path d="M1 7.500H9" stroke="#fff" strokeWidth="2" /></S></WindowButton>
          <WindowButton aria-label="還原"><S w={10} h={10} stroke="#fff"><path d="M3 1.500H8.500V7M1.500 3.500H6.500V8.500H1.500Z" strokeWidth="1.500" /></S></WindowButton>
          <WindowButton aria-label="關閉" $close><Cross color="#fff" /></WindowButton>
        </WindowButtons>
      </TitleBar>
      <MenuBar>
        <S w={13} h={14}>
          <path d="M2 1.500H9L12 4V13H2Z" fill="#fff" />
          <path d="M4 4Q6 3 9 5L7 10Z" fill="#e0301e" stroke="none" />
          <path d="M1 3L5 4L6 9Z" fill="#c93" stroke="none" />
        </S>
        {menus.map((m) => <MenuItem key={m}>{m}</MenuItem>)}
        <MdiButtons>
          <MdiButton aria-label="最小化文件"><S w={8}><path d="M1 6H6" stroke="#567" strokeWidth="2" /></S></MdiButton>
          <MdiButton aria-label="還原文件"><S w={8} stroke="#567"><path d="M2.500 1.500H7V5M1 3.500H5V7H1Z" /></S></MdiButton>
          <MdiButton aria-label="關閉文件"><Cross size={7} color="#567" /></MdiButton>
        </MdiButtons>
      </MenuBar>
      <PropertyBar />
      <StandardBar />
      <Body>
        <Toolbox />
        <Drawing />
        <Dockers>
          <PropertiesDocker />
          <TransformDocker />
        </Dockers>
        <ColorPalette />
      </Body>
      <StatusBar>
        <span>填色:</span>
        <NoFill><S w={16} h={9}><path d="M0 0L16 9M16 0L0 9" /></S></NoFill>
      </StatusBar>
    </Window>
  );
}
